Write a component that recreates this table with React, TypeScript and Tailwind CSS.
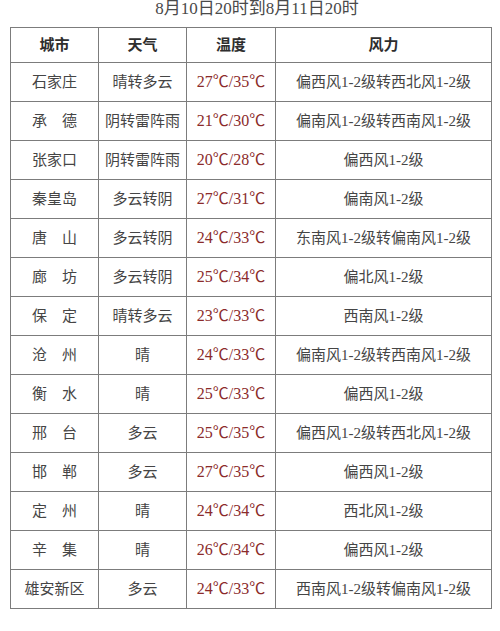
const rows: [string, string, string, string][] = [
  ['石家庄', '晴转多云', '27℃/35℃', '偏西风1-2级转西北风1-2级'],
  ['承　德', '阴转雷阵雨', '21℃/30℃', '偏南风1-2级转西南风1-2级'],
  ['张家口', '阴转雷阵雨', '20℃/28℃', '偏西风1-2级'],
  ['秦皇岛', '多云转阴', '27℃/31℃', '偏南风1-2级'],
  ['唐　山', '多云转阴', '24℃/33℃', '东南风1-2级转偏南风1-2级'],
  ['廊　坊', '多云转阴', '25℃/34℃', '偏北风1-2级'],
  ['保　定', '晴转多云', '23℃/33℃', '西南风1-2级'],
  ['沧　州', '晴', '24℃/33℃', '偏南风1-2级转西南风1-2级'],
  ['衡　水', '晴', '25℃/33℃', '偏西风1-2级'],
  ['邢　台', '多云', '25℃/35℃', '偏西风1-2级转西北风1-2级'],
  ['邯　郸', '多云', '27℃/35℃', '偏西风1-2级'],
  ['定　州', '晴', '24℃/34℃', '西北风1-2级'],
  ['辛　集', '晴', '26℃/34℃', '偏西风1-2级'],
  ['雄安新区', '多云', '24℃/33℃', '西南风1-2级转偏南风1-2级'],
];

const font = "font-['Liberation_Serif','Noto_Sans_CJK_SC',serif]";
const cell = 'border border-[#7c7c7c] text-center align-middle p-0';

export default function App() {
  return (
    <div className={`w-[500px] h-[631px] bg-white overflow-hidden ${font}`}>
      <div className="h-[27px] pl-[14px] text-center text-[17px] leading-[17px] text-[#4a4a4a]">
        8月10日20时到8月11日20时
      </div>
      <table className="ml-[10px] w-[482px] border-collapse table-fixed text-[15px] text-[#454545]">
        <colgroup>
          <col className="w-[88px]" />
          <col className="w-[88px]" />
          <col className="w-[89px]" />
          <col />
        </colgroup>
        <thead>
          <tr className="h-[35px] font-bold text-[#2e2e2e]">
            <th className={cell}>城市</th>
            <th className={cell}>天气</th>
            <th className={cell}>温度</th>
            <th className={cell}>风力</th>
          </tr>
        </thead>
        <tbody>
          {rows.map(([city, weather, temp, wind]) => (
            <tr key={city} className="h-[39px]">
              <td className={cell}>{city}</td>
              <td className={cell}>{weather}</td>
              <td className={`${cell} text-[16px] text-[#8b2b2b]`}>{temp}</td>
              <td className={cell}>{wind}</td>
            </tr>
          ))}
        </tbody>
      </table>
    </div>
  );
}
